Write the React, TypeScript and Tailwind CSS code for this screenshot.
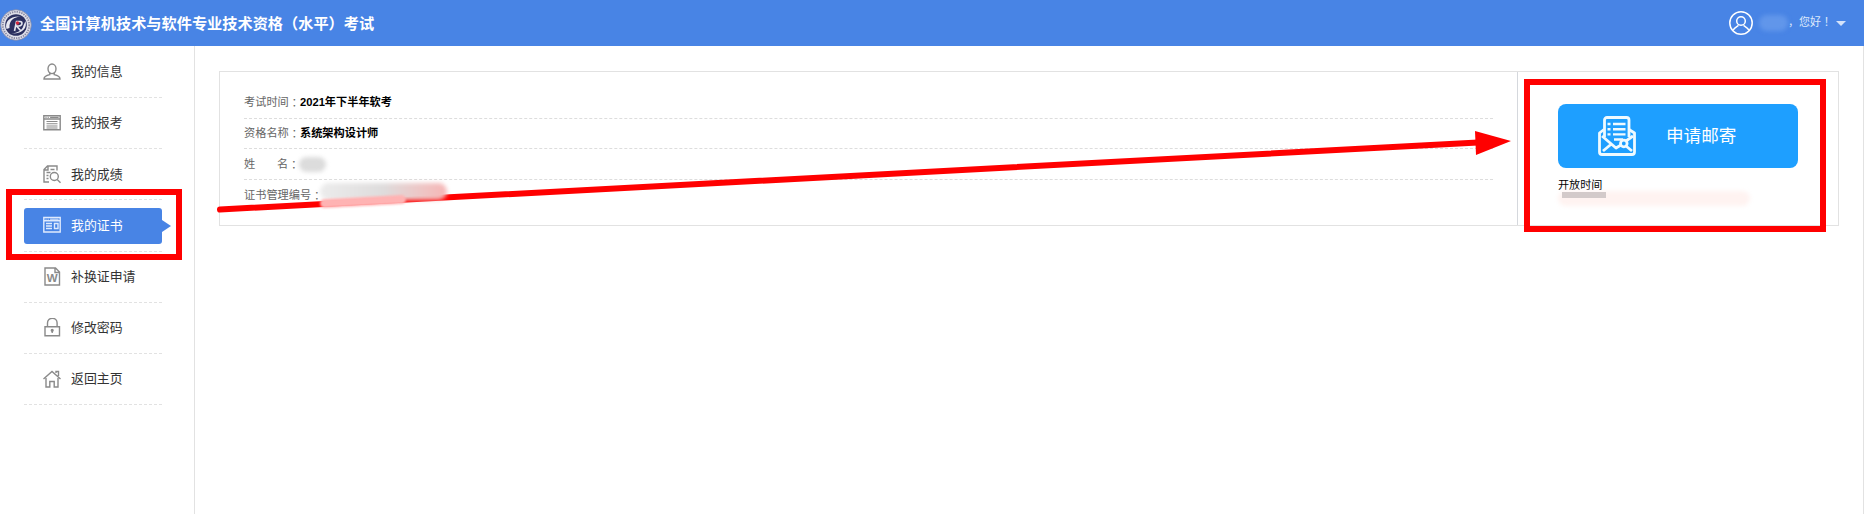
import type { ReactNode } from "react";

const icons: Record<string, ReactNode> = {
  user: (
    <>
      <ellipse cx="9" cy="6.800" rx="4" ry="4.800" />
      <path d="M6.800 11v1.600C3.500 13.300 1 14 1 17h16c0-3-2.500-3.700-5.800-4.400V11" />
    </>
  ),
  form: (
    <>
      <path d="M.8 1.800h16.400v14H.8zM1 5h16" />
      <path d="M2.500 3.400h1m1.200 0h1m1.400 0h8.500M3.500 7.500h11m-11 2.300h11m-11 2.200h11m-11 2h11" strokeWidth="1.100" />
    </>
  ),
  score: (
    <>
      <path d="M14 5.500V1H4.500L1 4.500V17h5M1 5h4V1" />
      <path d="M7.500 4.500h4M3.500 7.500h4M3.500 10.500h2M3.500 13.500h2" />
      <circle cx="11.300" cy="11.500" r="4" />
      <path d="m14.200 14.500 3.300 3.200" />
    </>
  ),
  cert: (
    <>
      <path d="M.8 1.500h16.400v14.500H.8zM1 4.800h16" />
      <path d="M2.500 3.200h1m1.200 0h1m1.400 0h8.500" strokeWidth="1" />
      <path d="M3 7.500h6M3 10h6M3 12.500h6M11.500 7.500h3.500v5h-3.500z" />
    </>
  ),
  lock: (
    <>
      <path d="M2 8.800h14.500v9H2z" />
      <path d="M4.500 8.500V5a4.800 4.800 0 0 1 9.600 0v3.500" />
      <circle cx="9.200" cy="12.300" r=".9" fill="currentColor" />
      <path d="M9.200 12.500v2.500" />
    </>
  ),
  home: (
    <>
      <path d="M.5 9 9 1.500 17.500 9M13 3V1.500h2.500V6" />
      <path d="M3 8v9h3.800v-5.500h4.400V17H15V8" />
    </>
  ),
};

const menu = [
  { icon: "user", label: "我的信息" },
  { icon: "form", label: "我的报考" },
  { icon: "score", label: "我的成绩" },
  { icon: "cert", label: "我的证书", active: true },
  { icon: "word", label: "补换证申请" },
  { icon: "lock", label: "修改密码" },
  { icon: "home", label: "返回主页" },
];

const MenuIcon = ({ name }: { name: string }) => (
  <svg viewBox="0 0 18 19" className="w-[18px] h-[19px] shrink-0" fill="none" stroke="currentColor" strokeWidth="1.4">
    {name === "word" ? (
      <>
        <path d="M2 1h10.500l4 4v13H2zM12 1v4.500h4.500" />
        <text x="9.100" y="14.800" textAnchor="middle" fontSize="11.500" fontWeight="700" fontFamily="Liberation Sans" fill="currentColor" stroke="none">
          W
        </text>
      </>
    ) : (
      icons[name]
    )}
  </svg>
);

const Logo = () => (
  <svg viewBox="0 0 32 32" className="w-8 h-8 shrink-0">
    <circle cx="16" cy="16" r="15.300" fill="#dfe0ea" stroke="#8088a8" strokeWidth=".8" />
    <circle cx="16" cy="16" r="13.200" fill="none" stroke="#8a8aa4" strokeWidth="1.800" strokeDasharray="1.400 1" />
    <circle cx="16" cy="16" r="10.800" fill="#2b3060" />
    <path d="M6.500 20C4.500 12.500 10 6.500 21 7.500 14 8 9 11 9.500 19M25.500 12c2 7-3 13-14 12.500 6-.5 11-3 12-8" fill="#e8e9f2" />
    <path d="M14.500 22 16.500 12.500h3.500c3 0 2.500 4-1 4.500h-2.500l4.500 5" fill="none" stroke="#e4e5ee" strokeWidth="1.600" />
    <circle cx="17.500" cy="14" r="1.700" fill="#d3263a" />
  </svg>
);

// full-width punctuation centred in its box
const Mark = ({ children }: { children: string }) => (
  <span className="font-['Noto_Sans_CJK_TC',sans-serif]">{children}</span>
);

const Header = () => (
  <header className="h-[46px] bg-[#4884e5] flex items-center justify-between text-white">
    <div className="flex items-center pt-[3px]">
      <Logo />
      <h1 className="ml-2 -mt-[3px] text-[15.2px] font-bold whitespace-nowrap">
        全国计算机技术与软件专业技术资格<Mark>（</Mark>水平<Mark>）</Mark>考试
      </h1>
    </div>
    <div className="flex items-center pr-[18px] text-[11px]">
      <svg viewBox="0 0 24 24" className="size-6" fill="none" stroke="currentColor" strokeWidth="1.5">
        <circle cx="12" cy="12" r="11.200" />
        <circle cx="12" cy="10" r="4.300" />
        <path d="M4 19.500c1.500-3 4-4.200 5.500-5.200M20 19.500c-1.500-3-4-4.200-5.500-5.200" />
      </svg>
      <span className="ml-[6px] h-4 w-[29px] rounded-full bg-[#6196ea] blur-[2px]" />
      <span className="-mt-[2px] w-12 whitespace-nowrap text-[#dce8fb]">
        ，您好<Mark>！</Mark>
      </span>
      <span className="border-x-5 border-t-5 border-x-transparent border-t-[#d5e3fa]" />
    </div>
  </header>
);

const Sidebar = () => (
  <aside className="w-[195px] shrink-0 border-r border-[#e2e2e2] pl-6 pt-[0.9px]">
    {menu.map((item) => (
      <div key={item.label} className="h-[51.2px] w-[138px] border-b border-dashed border-[#e2e2e2] flex items-center">
        <div
          className={
            item.active
              ? "relative h-9 w-full rounded-[3px] bg-[#4884e5] text-[#dfeafd] flex items-center pl-[19px]"
              : "h-9 w-full text-[#8a8a8a] flex items-center pl-[19px]"
          }
        >
          <MenuIcon name={item.icon} />
          <span className={item.active ? "ml-[10px] text-[12.9px] text-white" : "ml-[10px] text-[12.9px] text-[#333]"}>
            {item.label}
          </span>
          {item.active && (
            <span className="absolute left-full top-3 border-y-6 border-l-9 border-y-transparent border-l-[#4884e5]" />
          )}
        </div>
      </div>
    ))}
  </aside>
);

const Details = () => (
  <div className="flex-1 pl-6 pr-6 pt-[15px] text-[11.2px] text-[#666]">
    <div className="h-8 flex items-center border-b border-dashed border-[#ddd]">
      考试时间<Mark>：</Mark>
      <b className="text-black">2021年下半年软考</b>
    </div>
    <div className="h-[30px] flex items-center border-b border-dashed border-[#ddd]">
      资格名称<Mark>：</Mark>
      <b className="text-black">系统架构设计师</b>
    </div>
    <div className="h-[31px] flex items-center border-b border-dashed border-[#ddd]">
      <span className="w-[33px]">姓</span>名<Mark>：</Mark>
      <span className="h-[15px] w-[27px] rounded-full bg-[#dcdcdc] blur-[2px]" />
    </div>
    <div className="h-[30px] flex items-center">
      证书管理编号<Mark>：</Mark>
    </div>
  </div>
);

const Mail = () => (
  <div className="w-[321px] shrink-0 border-l border-[#d5d8dd] pl-10 pt-8 text-[11.1px] text-black">
    <button className="w-60 h-16 rounded-lg bg-[#1e9fff] flex items-center pl-[39px] text-white text-[17.6px]">
      <svg viewBox="0 0 40 40" className="size-10" fill="none" stroke="#effaff" strokeWidth="2.8" strokeLinejoin="round">
        <path d="M7 13.500 2.500 17v19a2.500 2.500 0 0 0 2.500 2.500h30a2.500 2.500 0 0 0 2.500-2.500V17L32 13.500" />
        <path d="M7.500 21V4A2.500 2.500 0 0 1 10 1.500h19.500A2.500 2.500 0 0 1 32 4v17" />
        <path d="M10.500 8h3M16 8h12.500M10.500 13.200h3M16 13.200h12.500M10.500 18.400h3M16 18.400h12.500M17 23.500h9" strokeWidth="2.4" />
        <path d="m5 20 14 12 5-3M6 35l9-7.500M29 30l6 5M29 25l7-5" />
        <circle cx="26.800" cy="27.500" r="3.300" />
      </svg>
      <span className="ml-[29px]">申请邮寄</span>
    </button>
    <p className="mt-[9px] leading-4">开放时间</p>
  </div>
);

// hand-made marks drawn over the page: arrow, frames and smudges
const Marks = () => (
  <>
    <svg viewBox="0 0 1864 524" className="pointer-events-none absolute left-0 top-0 w-[1864px] h-[524px]">
      <path d="M220 209.500 1478 142.500" stroke="#f00" strokeWidth="6" strokeLinecap="round" />
      <path d="M1475 131 1511 141 1476 155z" fill="#f00" />
    </svg>
    <div className="absolute left-[320px] top-[183px] h-[17px] w-[127px] rounded-full bg-linear-to-r from-[#ececec] via-[#dedcdc] to-[#f6b6b6] blur-[2px]" />
    <div className="absolute left-[320px] top-[197px] h-[9px] w-[86px] -rotate-3 rounded-full bg-[#ffb3b3] blur-[1px]" />
    <div className="absolute left-[1558px] top-[191px] h-[15px] w-[192px] rounded-full bg-[#fff3f1] blur-[2px]" />
    <div className="absolute left-[1562px] top-[192px] h-[6px] w-11 bg-[#d3caca]" />
    <div className="absolute left-[6px] top-[189px] h-[71px] w-44 border-6 border-[#f00]" />
    <div className="absolute left-[1524px] top-[79px] h-[153px] w-[302px] border-6 border-[#f00]" />
  </>
);

const App = () => {
  return (
    <div className="relative w-[1864px] h-[524px] overflow-hidden bg-white font-['Liberation_Sans','Noto_Sans_CJK_SC',sans-serif]">
      <Header />
      <div className="flex h-[468px] border-r border-[#e2e2e2]">
        <Sidebar />
        <main className="flex-1 pl-6 pr-6 pt-[25px]">
          <section className="flex h-[155px] border border-[#e2e2e2]">
            <Details />
            <Mail />
          </section>
        </main>
      </div>
      <Marks />
    </div>
  );
};

export default App;
